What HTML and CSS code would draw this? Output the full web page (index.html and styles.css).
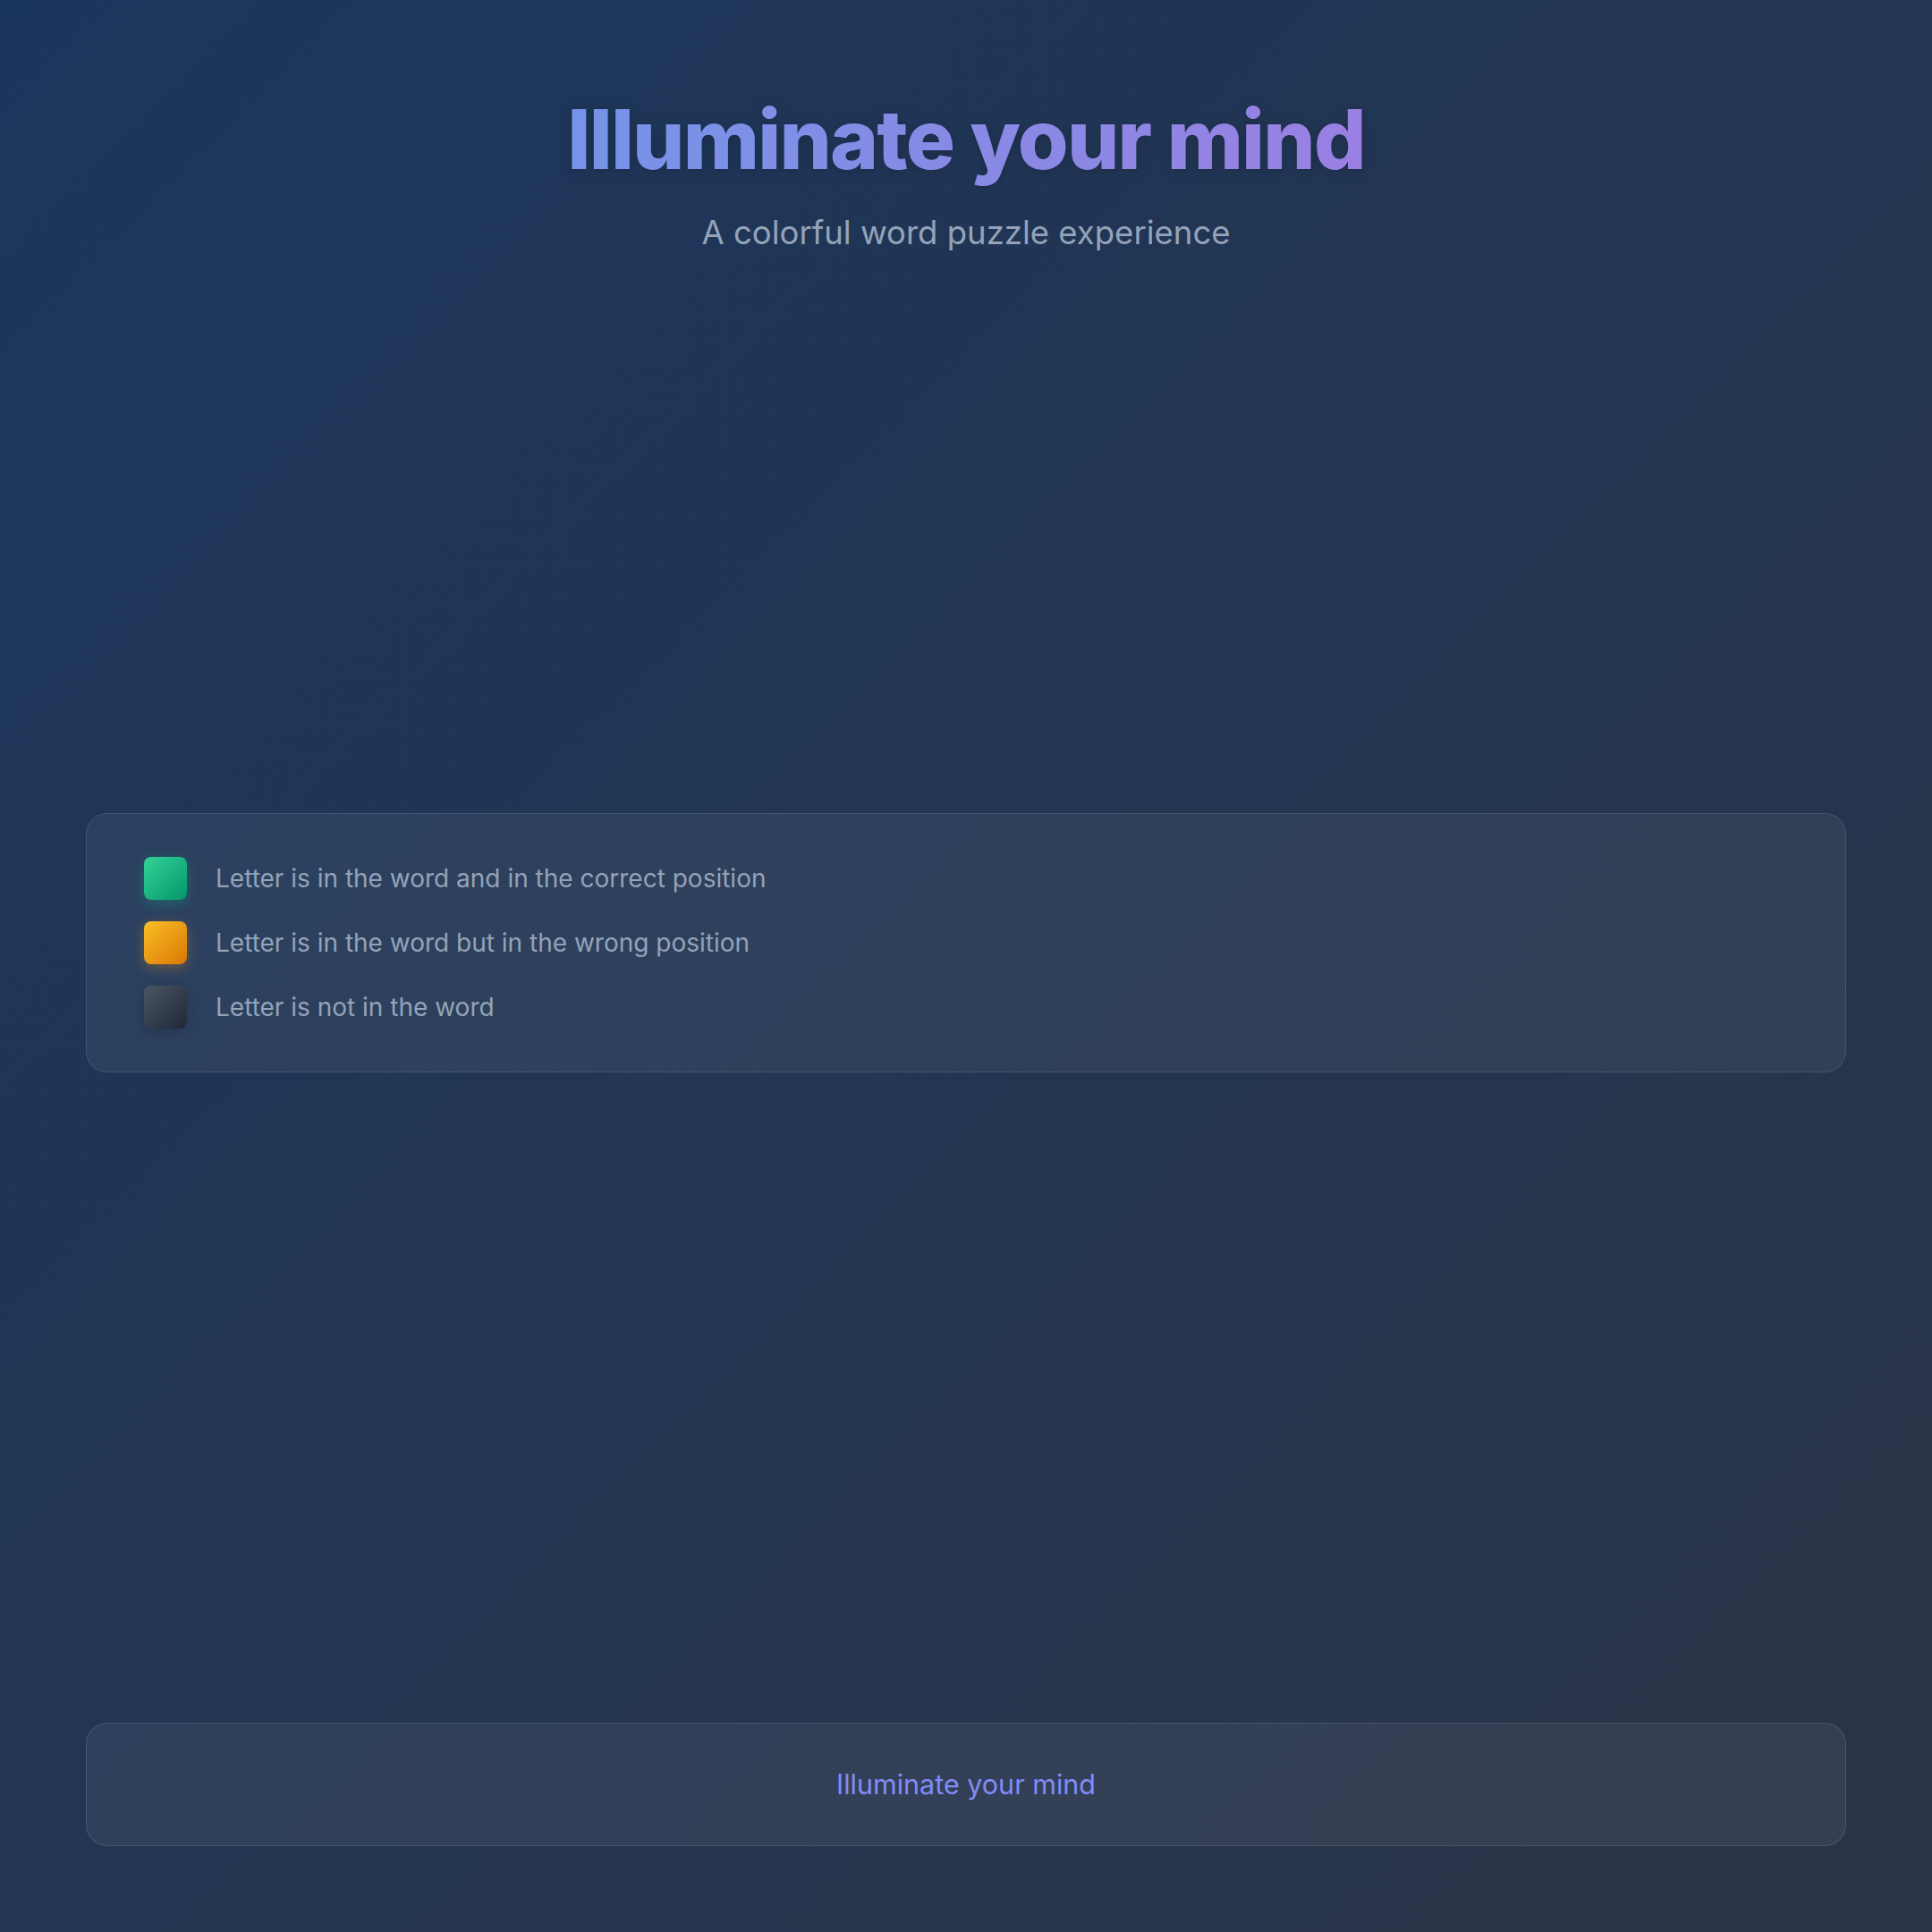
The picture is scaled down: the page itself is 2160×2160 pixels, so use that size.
FILE: index.html
```html
<!DOCTYPE html>
<html lang="en">
<head>
<meta charset="utf-8">
<title>Illuminate your mind</title>
<link rel="stylesheet" href="styles.css">
</head>
<body>
<div class="page">
  <header class="header">
    <h1 class="title">Illuminate your mind</h1>
    <p class="subtitle">A colorful word puzzle experience</p>
  </header>
  <main class="main">
    <div class="board"></div>
    <section class="legend">
      <div class="legend-row"><span class="swatch swatch-correct"></span><span class="legend-text">Letter is in the word and in the correct position</span></div>
      <div class="legend-row"><span class="swatch swatch-present"></span><span class="legend-text">Letter is in the word but in the wrong position</span></div>
      <div class="legend-row"><span class="swatch swatch-absent"></span><span class="legend-text">Letter is not in the word</span></div>
    </section>
  </main>
  <footer class="footer">
    <span class="footer-text">Illuminate your mind</span>
  </footer>
</div>
</body>
</html>
```

FILE: styles.css
```css
* { box-sizing: border-box; }
html, body { margin: 0; padding: 0; }
body {
  min-height: 2160px;
  background: linear-gradient(135deg, #1b365d 0%, #2b3446 100%);
  font-family: Inter, "Noto Sans", "Liberation Sans", sans-serif;
  color: #94a3b8;
}
.page {
  min-height: 2160px;
  padding: 96px;
  display: flex;
  flex-direction: column;
}
.header {
  text-align: center;
  padding-top: 5px;
}
.title {
  margin: 0;
  font-size: 92px;
  font-weight: 800;
  letter-spacing: -0.02em;
  line-height: 1.2;
  background: linear-gradient(90deg, #7594e8 0%, #9a80e2 100%);
  -webkit-background-clip: text;
  background-clip: text;
  color: transparent;
  display: inline-block;
  filter: drop-shadow(0 2px 6px rgba(0, 0, 0, 0.18));
}
.subtitle {
  margin: 24px 0 0;
  font-size: 36.5px;
  line-height: 50px;
  color: #94a3b8;
}
.main {
  flex: 1;
  display: flex;
  flex-direction: column;
}
.board {
  height: 576px;
  margin: 24px 0;
}
.legend {
  border: 1px solid rgba(148, 163, 184, 0.2);
  border-radius: 24px;
  background: rgba(255, 255, 255, 0.055);
  padding: 48px 64px;
  display: flex;
  flex-direction: column;
  gap: 24px;
}
.legend-row {
  display: flex;
  align-items: center;
  gap: 32px;
}
.swatch {
  width: 48px;
  height: 48px;
  border-radius: 8px;
  flex: none;
}
.swatch-correct {
  background: linear-gradient(135deg, #34d399, #059669);
  box-shadow: 0 4px 14px rgba(16, 185, 129, 0.3);
}
.swatch-present {
  background: linear-gradient(135deg, #fbbf24, #d97706);
  box-shadow: 0 4px 14px rgba(245, 158, 11, 0.3);
}
.swatch-absent {
  background: linear-gradient(135deg, #4b5563, #1f2937);
  box-shadow: 0 4px 14px rgba(0, 0, 0, 0.15);
}
.legend-text {
  font-size: 28px;
  color: #94a3b8;
}
.footer {
  border: 1px solid rgba(148, 163, 184, 0.22);
  border-radius: 24px;
  background: rgba(255, 255, 255, 0.06);
  padding: 44px;
  text-align: center;
}
.footer-text {
  font-size: 30.5px;
  line-height: 48px;
  color: #818cf8;
}
```
